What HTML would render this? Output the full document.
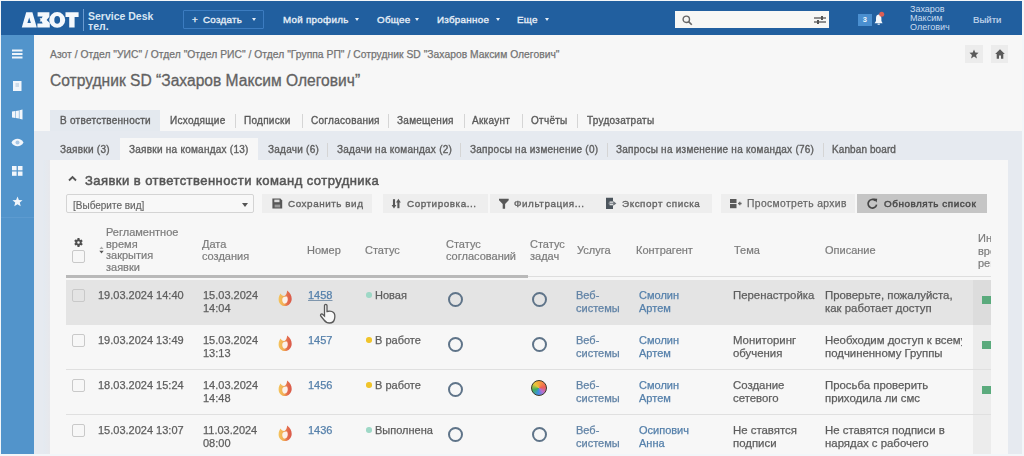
<!DOCTYPE html>
<html><head><meta charset="utf-8">
<style>
*{box-sizing:border-box;margin:0;padding:0}
html,body{width:1024px;height:456px;overflow:hidden;background:#f2f6f9;font-family:"Liberation Sans",sans-serif;color:#555}
.a{position:absolute;white-space:nowrap}
#hdr{position:absolute;left:1px;top:1px;width:1021px;height:34px;background:#215f9f}
#side{position:absolute;left:1px;top:35px;width:33px;height:419px;background:#5294cb}
.nav{color:#e6eef7;font-size:9.8px;letter-spacing:0.28px;-webkit-text-stroke:0.35px #e6eef7;top:14px;line-height:12px}
.caret{position:absolute;width:0;height:0;border-left:2.5px solid transparent;border-right:2.5px solid transparent;border-top:3px solid #e6eef7}
.t1{font-size:10px;letter-spacing:0.27px;-webkit-text-stroke:0.35px #5a5a5a;color:#5a5a5a;top:115px;line-height:12px}
.t2{font-size:10px;letter-spacing:0.25px;-webkit-text-stroke:0.35px #5e5e5e;color:#5e5e5e;top:144px;line-height:12px}
.sep{position:absolute;width:1px;background:#d5d5d5}
.btn{position:absolute;top:194px;height:19px;background:#eeeeee}
.bt{font-size:9.9px;letter-spacing:0.55px;-webkit-text-stroke:0.35px #646464;color:#646464;top:198px;line-height:12px}
.th{font-size:11px;color:#7c7c7c;line-height:11.7px;margin-top:1px;-webkit-text-stroke:0.2px #7c7c7c}
.td{font-size:11px;color:#5e5e5e;line-height:12.6px;-webkit-text-stroke:0.25px currentColor}
.lk{color:#5681ab}
.sv{color:#6183a6}
.cb{position:absolute;width:13px;height:13px;border:1px solid #c9c9c9;border-radius:2px;background:#f7f7f7}
.circ{position:absolute;width:15px;height:15px;border:2px solid #5f7489;border-radius:50%}
.dot{position:absolute;width:5.5px;height:5.5px;border-radius:50%}
.rsep{position:absolute;left:66px;width:925px;height:1px;background:#e0e0e0}
.gsq{position:absolute;left:982px;width:9px;height:8px;background:#5aaa7c}
</style></head><body><div id="wrap" style="position:absolute;left:0;top:0;width:1024px;height:456px;filter:blur(0.35px)">
<div id="hdr"></div>
<!-- logo -->
<svg class="a" style="left:0;top:0" width="90" height="35" viewBox="0 0 90 35"><g fill="#f4f8fc">
<path d="M21.8 27.6 L26.2 12.3 L32.4 12.3 L36.8 27.6 Z M27.4 23 L30.9 23 L29.2 17.6 Z" fill-rule="evenodd"/>
<path d="M37.6 12.3 L49.4 12.3 L49.4 16.8 L46.6 19.9 L49.8 23 L49.8 27.6 L37.4 27.6 L37.4 23.4 L42.6 23.4 L41.8 21.6 L39.6 21.6 L40.6 19.9 L39.6 18.2 L41.8 18.2 L42.6 16.5 L37.6 16.5 Z"/>
<path d="M57.2 12.1 A8 7.8 0 1 1 57.2 27.7 A8 7.8 0 1 1 57.2 12.1 Z M57.2 16.1 A2.9 3.8 0 1 0 57.2 23.7 A2.9 3.8 0 1 0 57.2 16.1 Z" fill-rule="evenodd"/>
<path d="M65.5 12.3 L78.6 12.3 L78.6 17 L74.6 17 L74.6 27.6 L69.2 27.6 L69.2 17 L65.5 17 Z"/>
</g></svg>
<div class="a" style="left:83px;top:9px;width:1px;height:22px;background:#6a9bd0"></div>
<div class="a" style="left:88px;top:11px;font-size:10.5px;font-weight:bold;color:#d8e6f4;line-height:10px">Service Desk<br>тел.</div>
<!-- create -->
<div class="a" style="left:183px;top:10px;width:81px;height:19px;border:1px solid #3c7cc0;border-radius:1px"></div>
<div class="a nav" style="left:192px;">+</div>
<div class="a nav" style="left:203px;">Создать</div><div class="caret" style="left:252px;top:18px"></div>
<div class="a nav" style="left:283px;">Мой профиль</div><div class="caret" style="left:355px;top:18px"></div>
<div class="a nav" style="left:377px;">Общее</div><div class="caret" style="left:415px;top:18px"></div>
<div class="a nav" style="left:437px;">Избранное</div><div class="caret" style="left:496px;top:18px"></div>
<div class="a nav" style="left:517px;">Еще</div><div class="caret" style="left:545px;top:18px"></div>
<!-- search -->
<div class="a" style="left:675px;top:11px;width:154px;height:17px;background:#f7f7f5"></div>
<svg class="a" style="left:682px;top:15px" width="11" height="11" viewBox="0 0 11 11"><circle cx="4.3" cy="4.3" r="3.2" fill="none" stroke="#666" stroke-width="1.4"/><line x1="6.6" y1="6.6" x2="9.8" y2="9.8" stroke="#666" stroke-width="1.6"/></svg>
<svg class="a" style="left:814px;top:15px" width="12" height="10" viewBox="0 0 12 10"><line x1="0" y1="3" x2="12" y2="3" stroke="#555" stroke-width="1.3"/><line x1="0" y1="7" x2="12" y2="7" stroke="#555" stroke-width="1.3"/><rect x="7" y="1" width="2" height="4" fill="#555"/><rect x="3" y="5" width="2" height="4" fill="#555"/></svg>
<!-- badge -->
<div class="a" style="left:858px;top:13.5px;width:13.5px;height:12.5px;background:#4a8fd0;color:#eef6fc;font-size:7.5px;text-align:center;line-height:12.5px;font-weight:bold">3</div>
<svg class="a" style="left:872px;top:10px" width="14" height="16" viewBox="0 0 14 16"><path d="M6.5 4.5 C4.5 4.8 4 6.5 4 8.5 L4 11 L2.6 13.2 L10.6 13.2 L9.4 11 L9.4 8.5 C9.4 6.5 8.8 4.8 6.5 4.5Z" fill="#f4f8fc"/><rect x="5.6" y="13.6" width="2.2" height="1.2" fill="#e4ecf4"/><circle cx="9.7" cy="4.3" r="2.5" fill="#dc5f55"/></svg>
<div class="a" style="left:910px;top:5px;font-size:9px;line-height:9px;color:#c9dcf0">Захаров<br>Максим<br>Олегович</div>
<div class="a" style="left:973px;top:14px;font-size:9.6px;line-height:11px;color:#c4d7ec;-webkit-text-stroke:0.2px #c4d7ec">Выйти</div>

<div id="side"></div>
<div class="a" style="left:34px;top:35px;width:988px;height:96px;background:#f7f7f7"></div>

<!-- sidebar icons -->
<svg class="a" style="left:12px;top:49px" width="11" height="10" viewBox="0 0 11 10"><rect y="0.5" width="10.5" height="2" fill="#eef4fa"/><rect y="4" width="10.5" height="2" fill="#eef4fa"/><rect y="7.5" width="10.5" height="2" fill="#eef4fa"/></svg>
<svg class="a" style="left:13px;top:81px" width="9" height="10" viewBox="0 0 9 10"><rect width="8.5" height="10" fill="#f2f6fb"/><rect x="2.5" y="2.5" width="3.5" height="1" fill="#a8c0d8"/><rect x="2.5" y="4.5" width="3.5" height="1" fill="#a8c0d8"/></svg>
<svg class="a" style="left:12px;top:109px" width="11" height="11" viewBox="0 0 11 11"><path d="M0 2.6 L3.3 2.1 L3.3 8.9 L0 8.4Z M3.8 2 L6.9 1.4 L6.9 9.6 L3.8 9Z M7.4 1.3 L10.5 0.4 L10.5 10.6 L7.4 9.7Z" fill="#f2f6fb"/></svg>
<svg class="a" style="left:11px;top:138px" width="13" height="9" viewBox="0 0 13 9"><path d="M0.5 4.5 C3 -0.5 10 -0.5 12.5 4.5 C10 9.5 3 9.5 0.5 4.5Z" fill="#f2f6fb"/><circle cx="6.5" cy="4.5" r="2" fill="#a8c6e4"/></svg>
<svg class="a" style="left:12px;top:166px" width="11" height="10" viewBox="0 0 11 10"><rect width="4.6" height="4.3" fill="#f2f6fb"/><rect x="5.9" width="4.6" height="4.3" fill="#f2f6fb"/><rect y="5.5" width="4.6" height="4.3" fill="#f2f6fb"/><rect x="5.9" y="5.5" width="4.6" height="4.3" fill="#f2f6fb"/></svg>
<svg class="a" style="left:12px;top:196px" width="11" height="11" viewBox="0 0 24 24"><path d="M12 1 L15 8.5 L23 9 L17 14.2 L19 22.5 L12 18 L5 22.5 L7 14.2 L1 9 L9 8.5Z" fill="#f2f6fb"/></svg>
<div class="a" style="left:1px;top:217px;width:33px;height:1px;background:#5d9bd0"></div>

<!-- breadcrumb & title -->
<div class="a" style="left:50px;top:49px;font-size:10.3px;letter-spacing:0.03px;color:#737373;line-height:12px;-webkit-text-stroke:0.25px #737373">Азот / Отдел "УИС" / Отдел "Отдел РИС" / Отдел "Группа РП" / Сотрудник SD "Захаров Максим Олегович"</div>
<div class="a" style="left:50px;top:72px;font-size:15.6px;color:#626262;line-height:18px;-webkit-text-stroke:0.3px #626262">Сотрудник SD “Захаров Максим Олегович”</div>
<!-- star/home -->
<div class="a" style="left:965px;top:45px;width:18px;height:18px;background:#ececec"></div>
<svg class="a" style="left:969px;top:49px" width="10" height="10" viewBox="0 0 24 24"><path d="M12 1 L15 8.5 L23 9 L17 14.2 L19 22.5 L12 18 L5 22.5 L7 14.2 L1 9 L9 8.5Z" fill="#5a5a5a"/></svg>
<div class="a" style="left:991px;top:45px;width:17px;height:18px;background:#ececec"></div>
<svg class="a" style="left:995px;top:49px" width="10" height="10" viewBox="0 0 10 10"><path d="M5 0.3 L9.8 5 L8.3 5 L8.3 9.7 L6 9.7 L6 6.5 L4 6.5 L4 9.7 L1.7 9.7 L1.7 5 L0.2 5Z" fill="#5a5a5a"/></svg>

<!-- tabs row 1 -->
<div class="a" style="left:50px;top:110px;width:110px;height:22px;background:#e4e9ef"></div>
<div class="a t1" style="left:60px">В ответственности</div>
<div class="a t1" style="left:170px">Исходящие</div><div class="sep" style="left:235px;top:114px;height:14px"></div>
<div class="a t1" style="left:244px">Подписки</div><div class="sep" style="left:302px;top:114px;height:14px"></div>
<div class="a t1" style="left:311px">Согласования</div><div class="sep" style="left:388px;top:114px;height:14px"></div>
<div class="a t1" style="left:397px">Замещения</div><div class="sep" style="left:464px;top:114px;height:14px"></div>
<div class="a t1" style="left:472px">Аккаунт</div><div class="sep" style="left:522px;top:114px;height:14px"></div>
<div class="a t1" style="left:531px">Отчёты</div><div class="sep" style="left:577px;top:114px;height:14px"></div>
<div class="a t1" style="left:587px">Трудозатраты</div>

<!-- blue-gray area -->
<div class="a" style="left:34px;top:131px;width:988px;height:323px;background:#e6eaf0"></div>
<!-- tabs row 2 -->
<div class="a" style="left:120px;top:138px;width:138px;height:22px;background:#f7f7f7"></div>
<div class="a t2" style="left:60px">Заявки (3)</div>
<div class="a t2" style="left:129px">Заявки на командах (13)</div>
<div class="a t2" style="left:268px">Задачи (6)</div><div class="sep" style="left:327px;top:143px;height:14px"></div>
<div class="a t2" style="left:337px">Задачи на командах (2)</div><div class="sep" style="left:460px;top:143px;height:14px"></div>
<div class="a t2" style="left:470px">Запросы на изменение (0)</div><div class="sep" style="left:607px;top:143px;height:14px"></div>
<div class="a t2" style="left:616px">Запросы на изменение на командах (76)</div><div class="sep" style="left:823px;top:143px;height:14px"></div>
<div class="a t2" style="left:832px;letter-spacing:0.1px">Kanban board</div>

<!-- panel -->
<div class="a" style="left:43px;top:160px;width:7px;height:296px;background:linear-gradient(90deg,#e4eaf1,#e7e8ec)"></div>
<div class="a" style="left:50px;top:160px;width:958px;height:296px;background:#f7f7f7"></div>
<svg class="a" style="left:68px;top:175px" width="9" height="7" viewBox="0 0 9 7"><path d="M1 5.5 L4.5 2 L8 5.5" fill="none" stroke="#555" stroke-width="1.8"/></svg>
<div class="a" style="left:85px;top:172.5px;font-size:13px;letter-spacing:0.45px;-webkit-text-stroke:0.5px #555;color:#555;line-height:16px">Заявки в ответственности команд сотрудника</div>

<!-- toolbar -->
<div class="a" style="left:66px;top:194px;width:188px;height:19px;border:1px solid #d4d4d4;border-radius:2px;background:#f8f8f8"></div>
<div class="a" style="left:73px;top:199.5px;font-size:10px;color:#666;line-height:12px;-webkit-text-stroke:0.15px #666">[Выберите вид]</div>
<div class="caret" style="left:241.5px;top:202.5px;border-left-width:3px;border-right-width:3px;border-top:4px solid #555"></div>

<div class="btn" style="left:262px;width:110px"></div>
<div class="a bt" style="left:288px">Сохранить вид</div>

<div class="btn" style="left:383px;width:105px"></div>
<div class="a bt" style="left:407px">Сортировка...</div>

<div class="btn" style="left:490px;width:109px"></div>
<div class="a bt" style="left:514px">Фильтрация...</div>

<div class="btn" style="left:598px;width:114px"></div>
<div class="a bt" style="left:622px">Экспорт списка</div>

<div class="btn" style="left:721px;width:134px"></div>
<div class="a bt" style="left:747px;font-size:10.3px;letter-spacing:0.4px;color:#686868;-webkit-text-stroke:0.25px #686868">Просмотреть архив</div>

<div class="btn" style="left:857px;width:130px;background:#c5c5c5"></div>
<div class="a bt" style="left:884px;color:#4a4a4a;-webkit-text-stroke:0.45px #4a4a4a">Обновлять список</div>

<svg class="a" style="left:0;top:0" width="1024" height="456" viewBox="0 0 1024 456">
<g fill="#575757">
<path d="M272.4 198.6 H280.4 L282.2 200.4 V208.4 H272.4Z"/>
</g>
<rect x="274.3" y="199.6" width="5.2" height="2.6" fill="#dcdcdc"/>
<rect x="274.6" y="204.6" width="5.6" height="2.8" fill="#9a9a9a"/>
<path d="M394 199.2 V206" stroke="#585858" stroke-width="2.1"/>
<path d="M391.6 205 L394 208.4 L396.4 205Z" fill="#585858"/>
<path d="M398.4 208.2 V201.4" stroke="#585858" stroke-width="2.1"/>
<path d="M396 202.4 L398.4 198.8 L400.8 202.4Z" fill="#585858"/>
<path d="M499 198.8 H508.7 V200.2 L505.1 204 V208.7 H502.7 V204 L499 200.2Z" fill="#585858"/>
<path d="M606 197.8 H613 V201.6 H609.6 V205.2 H613 V208.9 H606Z" fill="#4b545c"/>
<path d="M608.5 203.4 H613.5" stroke="#8a9096" stroke-width="1.6"/>
<path d="M613.2 201 L616.4 203.4 L613.2 205.8Z" fill="#6a7076"/>
<rect x="730" y="199" width="6.5" height="4.1" fill="#585858"/>
<rect x="730" y="204" width="6.5" height="4.2" fill="#585858"/>
<path d="M738 203.5 H741.6 M739.8 201.7 V205.3" stroke="#666" stroke-width="1.3"/>
<path d="M875.3 200.6 A4.3 4.3 0 1 0 876.6 204.6" fill="none" stroke="#464646" stroke-width="1.7"/>
<path d="M873.2 198.6 L877.2 198.8 L876.6 202.6Z" fill="#464646"/>
</svg>
<!-- table header -->
<svg class="a" style="left:73px;top:237px" width="11" height="11" viewBox="0 0 24 24"><path fill="#4f4f4f" d="M19.4 13a7.5 7.5 0 0 0 0-2l2.1-1.6-2-3.5-2.5 1a7.6 7.6 0 0 0-1.7-1L15 3h-4l-.4 2.7a7.6 7.6 0 0 0-1.7 1l-2.5-1-2 3.5L6.6 11a7.5 7.5 0 0 0 0 2l-2.1 1.6 2 3.5 2.5-1a7.6 7.6 0 0 0 1.7 1L11 21h4l.4-2.7a7.6 7.6 0 0 0 1.7-1l2.5 1 2-3.5zM13 14.6a2.6 2.6 0 1 1 0-5.2 2.6 2.6 0 0 1 0 5.2z" transform="translate(-1.5 0) scale(1.08) translate(-0.5 -0.9)"/></svg>
<div class="cb" style="left:72px;top:250px"></div>
<svg class="a" style="left:98.5px;top:245.5px" width="5" height="8" viewBox="0 0 5 8"><path d="M0.5 3 L2.5 0.5 L4.5 3Z" fill="#aaa"/><path d="M0.3 4.8 L2.5 7.6 L4.7 4.8Z" fill="#555"/></svg>
<div class="a th" style="left:106px;top:226px">Регламентное<br>время<br>закрытия<br>заявки</div>
<div class="a th" style="left:202px;top:238px">Дата<br>создания</div>
<div class="a th" style="left:307px;top:244px">Номер</div>
<div class="a th" style="left:365px;top:244px">Статус</div>
<div class="a th" style="left:446px;top:238px">Статус<br>согласований</div>
<div class="a th" style="left:530px;top:238px">Статус<br>задач</div>
<div class="a th" style="left:577px;top:244px">Услуга</div>
<div class="a th" style="left:636px;top:244px">Контрагент</div>
<div class="a th" style="left:734px;top:244px">Тема</div>
<div class="a th" style="left:825px;top:244px">Описание</div>
<div class="a" style="left:978px;top:231px;width:13px;height:40px;overflow:hidden"><div class="th" style="line-height:12.5px;white-space:nowrap">Инф<br>врем<br>реш</div></div>
<div class="a" style="left:66px;top:276px;width:925px;height:1px;background:#dedede"></div>
<div class="a" style="left:66px;top:275px;width:462px;height:2.5px;background:#b9b9b9"></div>

<!-- rows -->
<div class="a" style="left:66px;top:280px;width:925px;height:44.5px;background:#e4e4e4"></div>
<div class="a" style="left:973px;top:280px;width:18px;height:44.5px;background:#dcdcdc"></div>
<div class="a" style="left:973px;top:325px;width:18px;height:131px;background:#ececec"></div>
<div class="rsep" style="top:369px"></div>
<div class="rsep" style="top:414px"></div>

<!-- row1 -->
<div class="cb" style="left:72px;top:289px;background:#e4e4e4"></div>
<div class="a td" style="left:98px;top:289px">19.03.2024 14:40</div>
<div class="a td" style="left:203px;top:289px">15.03.2024<br>14:04</div>
<div class="a td lk" style="left:308px;top:289px;text-decoration:underline;text-decoration-color:#7f96ad">1458</div>
<div class="dot" style="left:366px;top:292px;background:#9ed8c6"></div>
<div class="a td" style="left:375px;top:289px">Новая</div>
<div class="circ" style="left:448.3px;top:291.5px"></div>
<div class="circ" style="left:531.5px;top:291.5px"></div>
<div class="a td sv" style="left:576px;top:289px">Веб-<br>системы</div>
<div class="a td lk" style="left:639px;top:289px">Смолин<br>Артем</div>
<div class="a td" style="font-size:11.4px;left:733px;top:289px">Перенастройка</div>
<div class="a td" style="font-size:11.4px;line-height:13.2px;color:#5c5c5c;left:825px;top:289px">Проверьте, пожалуйста,<br>как работает доступ</div>
<div class="gsq" style="top:296px"></div>

<!-- row2 -->
<div class="cb" style="left:72px;top:334px"></div>
<div class="a td" style="left:98px;top:334px">19.03.2024 13:49</div>
<div class="a td" style="left:203px;top:334px">15.03.2024<br>13:13</div>
<div class="a td lk" style="left:308px;top:334px">1457</div>
<div class="dot" style="left:366px;top:337px;background:#f0c42a"></div>
<div class="a td" style="left:375px;top:334px">В работе</div>
<div class="circ" style="left:448.3px;top:336.5px"></div>
<div class="circ" style="left:531.5px;top:336.5px"></div>
<div class="a td sv" style="left:576px;top:334px">Веб-<br>системы</div>
<div class="a td lk" style="left:639px;top:334px">Смолин<br>Артем</div>
<div class="a td" style="font-size:11.4px;left:733px;top:334px">Мониторинг<br>обучения</div>
<div class="a" style="left:825px;top:334px;width:137px;overflow:hidden"><div class="td" style="font-size:11.4px;line-height:13.2px;color:#5c5c5c">Необходим доступ к всему<br>подчиненному Группы</div></div>
<div class="gsq" style="top:341px"></div>

<!-- row3 -->
<div class="cb" style="left:72px;top:379px"></div>
<div class="a td" style="left:98px;top:379px">18.03.2024 15:24</div>
<div class="a td" style="left:203px;top:379px">14.03.2024<br>14:48</div>
<div class="a td lk" style="left:308px;top:379px">1456</div>
<div class="dot" style="left:366px;top:382px;background:#f0c42a"></div>
<div class="a td" style="left:375px;top:379px">В работе</div>
<div class="circ" style="left:448.3px;top:381.5px"></div>
<div class="a" style="left:531px;top:380px;width:16px;height:16px;border-radius:50%;background:conic-gradient(#f7a23c 0deg,#ef5f55 80deg,#b86fd0 135deg,#3d8fe6 190deg,#43b05c 250deg,#e8c73a 310deg,#f7a23c 360deg);border:1.6px solid #3a3a2a"></div>
<div class="a td sv" style="left:576px;top:379px">Веб-<br>системы</div>
<div class="a td lk" style="left:639px;top:379px">Смолин<br>Артем</div>
<div class="a td" style="font-size:11.4px;left:733px;top:379px">Создание<br>сетевого</div>
<div class="a td" style="font-size:11.4px;line-height:13.2px;color:#5c5c5c;left:825px;top:379px">Просьба проверить<br>приходила ли смс</div>
<div class="gsq" style="top:386px"></div>

<!-- row4 -->
<div class="cb" style="left:72px;top:424px"></div>
<div class="a td" style="left:98px;top:424px">15.03.2024 13:07</div>
<div class="a td" style="left:203px;top:424px">11.03.2024<br>08:00</div>
<div class="a td lk" style="left:308px;top:424px">1436</div>
<div class="dot" style="left:366px;top:427px;background:#9ed8c6"></div>
<div class="a td" style="left:375px;top:424px">Выполнена</div>
<div class="circ" style="left:448.3px;top:426.5px"></div>
<div class="circ" style="left:531.5px;top:426.5px"></div>
<div class="a td sv" style="left:576px;top:424px">Веб-<br>системы</div>
<div class="a td lk" style="left:639px;top:424px">Осипович<br>Анна</div>
<div class="a td" style="font-size:11.4px;left:733px;top:424px">Не ставятся<br>подписи</div>
<div class="a td" style="font-size:11.4px;line-height:13.2px;color:#5c5c5c;left:825px;top:424px">Не ставятся подписи в<br>нарядах с рабочего</div>

<!-- fire icons -->
<svg class="a" style="left:278px;top:289px" width="15" height="18" viewBox="0 0 15 18"><defs><linearGradient id="fg" x1="0" x2="1" y1="0" y2="0"><stop offset="0" stop-color="#f4c45c"/><stop offset="0.4" stop-color="#f2ad55"/><stop offset="0.65" stop-color="#e4704e"/><stop offset="1" stop-color="#d9584a"/></linearGradient></defs><path d="M9.1 1.4 C12 3.5 13.8 6.5 13.7 10 C13.6 14 10.5 17.1 7 17.1 C3.5 17.1 0.6 14.5 0.6 10.5 C0.6 8 1.5 6 2.6 4.6 C3.3 6.2 4.5 7.2 6.3 7.1 C8 6 9.1 4 9.1 1.4 Z" fill="url(#fg)"/><path d="M4.3 9.8 C5 8 7.5 7.2 9.2 7.8 C10.2 10 10 13.6 7.2 14.6 C5 15 3.9 12.5 4.3 9.8Z" fill="#fbf1ea"/></svg>
<svg class="a" style="left:278px;top:334px" width="15" height="18" viewBox="0 0 15 18"><path d="M9.1 1.4 C12 3.5 13.8 6.5 13.7 10 C13.6 14 10.5 17.1 7 17.1 C3.5 17.1 0.6 14.5 0.6 10.5 C0.6 8 1.5 6 2.6 4.6 C3.3 6.2 4.5 7.2 6.3 7.1 C8 6 9.1 4 9.1 1.4 Z" fill="url(#fg)"/><path d="M4.3 9.8 C5 8 7.5 7.2 9.2 7.8 C10.2 10 10 13.6 7.2 14.6 C5 15 3.9 12.5 4.3 9.8Z" fill="#fbf1ea"/></svg>
<svg class="a" style="left:278px;top:379px" width="15" height="18" viewBox="0 0 15 18"><path d="M9.1 1.4 C12 3.5 13.8 6.5 13.7 10 C13.6 14 10.5 17.1 7 17.1 C3.5 17.1 0.6 14.5 0.6 10.5 C0.6 8 1.5 6 2.6 4.6 C3.3 6.2 4.5 7.2 6.3 7.1 C8 6 9.1 4 9.1 1.4 Z" fill="url(#fg)"/><path d="M4.3 9.8 C5 8 7.5 7.2 9.2 7.8 C10.2 10 10 13.6 7.2 14.6 C5 15 3.9 12.5 4.3 9.8Z" fill="#fbf1ea"/></svg>
<svg class="a" style="left:278px;top:424px" width="15" height="18" viewBox="0 0 15 18"><path d="M9.1 1.4 C12 3.5 13.8 6.5 13.7 10 C13.6 14 10.5 17.1 7 17.1 C3.5 17.1 0.6 14.5 0.6 10.5 C0.6 8 1.5 6 2.6 4.6 C3.3 6.2 4.5 7.2 6.3 7.1 C8 6 9.1 4 9.1 1.4 Z" fill="url(#fg)"/><path d="M4.3 9.8 C5 8 7.5 7.2 9.2 7.8 C10.2 10 10 13.6 7.2 14.6 C5 15 3.9 12.5 4.3 9.8Z" fill="#fbf1ea"/></svg>

<!-- hand cursor -->
<svg class="a" style="left:319px;top:303px" width="18" height="21" viewBox="0 0 18 21"><path d="M5.5 2.5 C5.5 1 8 1 8 2.5 L8 8.5 C10 8 13 8 14.5 9.5 C16 11 16 14 15.5 16 C15 18.5 13 20 10.5 20 C8 20 6.5 19 5 17 L1.8 13 C1 12 2 10.5 3.5 11.2 L5.5 13 Z" fill="#f8f8f8" stroke="#5a5a5a" stroke-width="1.3"/></svg>
<div class="a" style="left:0;top:454px;width:1024px;height:2px;background:#f2f6f9"></div>
</div></body></html>
